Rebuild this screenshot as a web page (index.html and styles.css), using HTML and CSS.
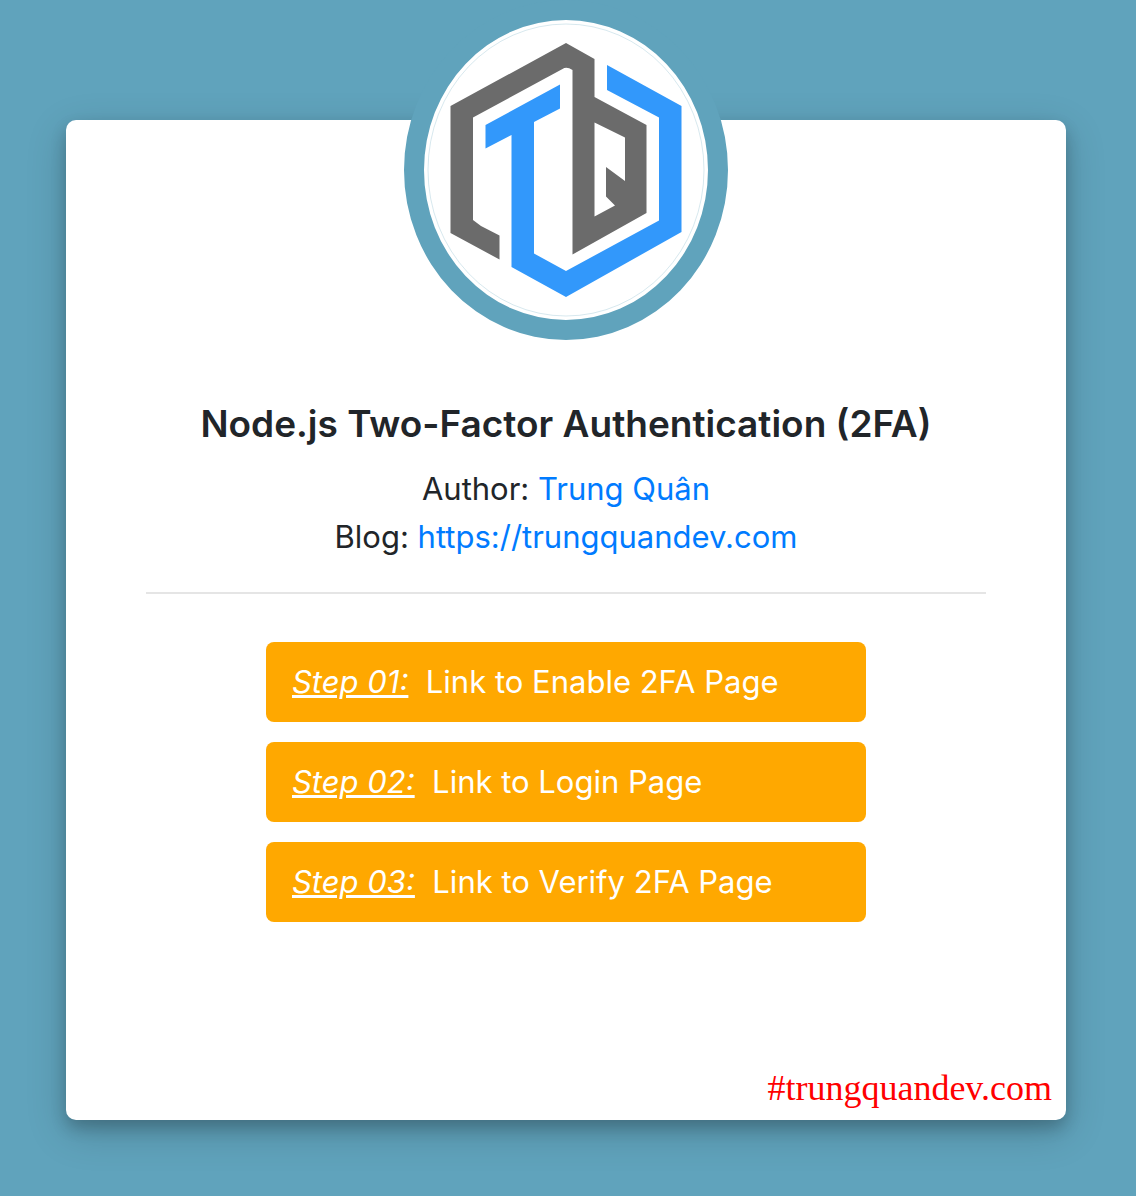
FILE: index.html
```html
<!DOCTYPE html>
<html lang="en">
<head>
  <meta charset="utf-8">
  <meta name="viewport" content="width=device-width, initial-scale=1">
  <title>Node.js Two-Factor Authentication (2FA)</title>
  <link rel="stylesheet" href="styles.css">
</head>
<body>
  <main class="card">
    <div class="avatar">
      <svg class="logo" viewBox="424 20 284 300" role="img" aria-label="TQ logo">
        <ellipse class="logo-rim" cx="566" cy="170" rx="138" ry="146"/>
        <path class="logo-grey" fill-rule="evenodd" d="M450.5 106 566 43l28.500 16v38L646.500 125v88L572.500 254.500V70q-6-4-10-1L473 117.500V220l8 6 18.500 9.500v24L450.500 233zM594.500 122.500v94L615 205.500l-9-9V167l19 14v-43.500z"/>
        <path class="logo-blue" d="M485.500 125 560 84.500v24L534 122v131.500L566 271l93-50.500V117.500L607 90V65l74.500 41v126L566 297l-54.500-30V135l-26 13.500z"/>
      </svg>
    </div>
    <h1 class="title">Node.js Two-Factor Authentication (2FA)</h1>
    <p class="info">Author: <a href="#author">Trung Quân</a></p>
    <p class="info">Blog: <a href="https://trungquandev.com">https://trungquandev.com</a></p>
    <hr class="divider">
    <nav class="steps">
      <a class="step" href="#enable"><span class="step-number">Step 01:</span>&nbsp; Link to Enable 2FA Page</a>
      <a class="step" href="#login"><span class="step-number">Step 02:</span>&nbsp; Link to Login Page</a>
      <a class="step" href="#verify"><span class="step-number">Step 03:</span>&nbsp; Link to Verify 2FA Page</a>
    </nav>
    <footer class="signature">#trungquandev.com</footer>
  </main>
</body>
</html>
```
FILE: styles.css
```css
* {
  box-sizing: border-box;
}

body {
  margin: 0;
  padding: 120px 70px 76px 66px;
  background: #60a3bc;
  color: #212529;
  font-family: Inter, "Liberation Sans", sans-serif;
  font-size: 31px;
  line-height: 48px;
}

.card {
  display: flex;
  flex-direction: column;
  max-width: 1000px;
  margin: 0 auto;
  padding: 0 80px 8px;
  border-radius: 10px;
  background: #fff;
  box-shadow: 0 8px 16px rgba(0, 0, 0, 0.2), 0 12px 40px rgba(0, 0, 0, 0.19);
}

.avatar {
  align-self: center;
  width: 324px;
  height: 340px;
  margin-top: -120px;
  border: 20px solid #60a3bc;
  border-radius: 50%;
  background: #fff;
}

.logo {
  display: block;
  width: 100%;
  height: 100%;
}

.logo-rim {
  fill: none;
  stroke: #60a3bc;
  stroke-opacity: 0.25;
}

.logo-grey {
  fill: #6b6b6b;
}

.logo-blue {
  fill: #3298fb;
}

.title {
  margin: 60px 0 17px;
  font-size: 37px;
  font-weight: 600;
  line-height: 48px;
  text-align: center;
}

.info {
  margin: 0;
  text-align: center;
}

.info a {
  color: #007bff;
  text-decoration: none;
}

.divider {
  width: 100%;
  margin: 31px 0 48px;
  border: 0;
  border-top: 2px solid #e5e5e5;
}

.steps {
  display: flex;
  flex-direction: column;
  align-self: center;
  gap: 20px;
  width: 100%;
  max-width: 600px;
}

.step {
  padding: 16px 26px;
  border-radius: 8px;
  background: #ffa800;
  color: #fff;
  text-decoration: none;
}

.step-number {
  font-style: italic;
  text-decoration: underline;
}

.signature {
  margin: 142px -66px 0 0;
  color: #f00;
  font-family: "Liberation Serif", serif;
  font-size: 36px;
  text-align: right;
}
```
